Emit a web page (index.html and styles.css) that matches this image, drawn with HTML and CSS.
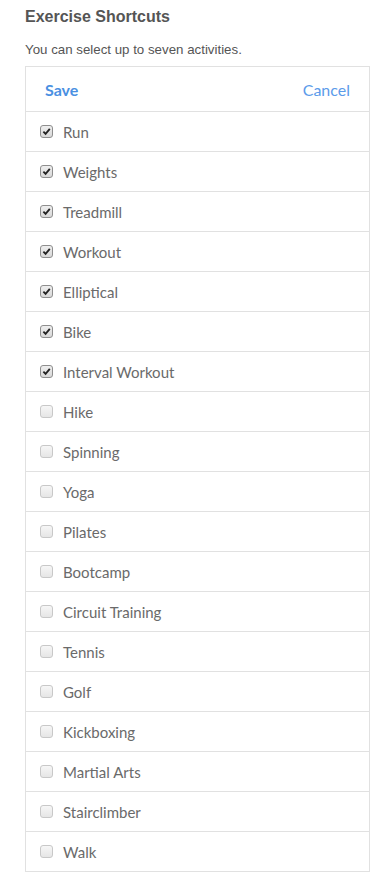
FILE: index.html
```html
<!DOCTYPE html>
<html>
<head>
<meta charset="utf-8">
<link rel="stylesheet" href="styles.css">
</head>
<body>
<div class="page">
  <h1 class="title">Exercise Shortcuts</h1>
  <p class="hint">You can select up to seven activities.</p>
  <div class="panel">
    <div class="panel-head">
      <span class="save">Save</span>
      <span class="cancel">Cancel</span>
    </div>
    <ul class="list">
      <li class="item"><span class="box on"><svg viewBox="0 0 12 12"><path d="M2.6 6.2 L5 8.6 L9.6 3.2" /></svg></span><span class="label">Run</span></li>
      <li class="item"><span class="box on"><svg viewBox="0 0 12 12"><path d="M2.6 6.2 L5 8.6 L9.6 3.2" /></svg></span><span class="label">Weights</span></li>
      <li class="item"><span class="box on"><svg viewBox="0 0 12 12"><path d="M2.6 6.2 L5 8.6 L9.6 3.2" /></svg></span><span class="label">Treadmill</span></li>
      <li class="item"><span class="box on"><svg viewBox="0 0 12 12"><path d="M2.6 6.2 L5 8.6 L9.6 3.2" /></svg></span><span class="label">Workout</span></li>
      <li class="item"><span class="box on"><svg viewBox="0 0 12 12"><path d="M2.6 6.2 L5 8.6 L9.6 3.2" /></svg></span><span class="label">Elliptical</span></li>
      <li class="item"><span class="box on"><svg viewBox="0 0 12 12"><path d="M2.6 6.2 L5 8.6 L9.6 3.2" /></svg></span><span class="label">Bike</span></li>
      <li class="item"><span class="box on"><svg viewBox="0 0 12 12"><path d="M2.6 6.2 L5 8.6 L9.6 3.2" /></svg></span><span class="label">Interval Workout</span></li>
      <li class="item"><span class="box"></span><span class="label">Hike</span></li>
      <li class="item"><span class="box"></span><span class="label">Spinning</span></li>
      <li class="item"><span class="box"></span><span class="label">Yoga</span></li>
      <li class="item"><span class="box"></span><span class="label">Pilates</span></li>
      <li class="item"><span class="box"></span><span class="label">Bootcamp</span></li>
      <li class="item"><span class="box"></span><span class="label">Circuit Training</span></li>
      <li class="item"><span class="box"></span><span class="label">Tennis</span></li>
      <li class="item"><span class="box"></span><span class="label">Golf</span></li>
      <li class="item"><span class="box"></span><span class="label">Kickboxing</span></li>
      <li class="item"><span class="box"></span><span class="label">Martial Arts</span></li>
      <li class="item"><span class="box"></span><span class="label">Stairclimber</span></li>
      <li class="item"><span class="box"></span><span class="label">Walk</span></li>
    </ul>
  </div>
</div>
</body>
</html>
```

FILE: styles.css
```css
html, body {
  margin: 0;
  padding: 0;
  background: #fff;
}
body {
  font-family: "Liberation Sans", Arial, sans-serif;
  color: #555;
}
.page {
  padding: 0 20px 0 25px;
}
.title {
  margin: 0;
  padding-top: 7px;
  font-size: 16px;
  line-height: 19px;
  font-weight: bold;
  color: #555;
}
.hint {
  margin: 0;
  padding-top: 16px;
  font-size: 13.3px;
  line-height: 15px;
  color: #555;
}
.panel {
  margin-top: 9px;
  width: 343px;
  border: 1px solid #e1e1e1;
}
.panel-head {
  display: flex;
  justify-content: space-between;
  align-items: center;
  height: 44px;
  padding: 0 19px 0 19px;
  border-bottom: 1px solid #e1e1e1;
  font-family: Lato, "Open Sans", sans-serif;
  font-size: 16px;
}
.save {
  font-weight: bold;
  color: #4a90e2;
}
.cancel {
  color: #5b9bea;
}
.list {
  list-style: none;
  margin: 0;
  padding: 0;
}
.item {
  display: flex;
  align-items: center;
  height: 39px;
  padding-left: 14px;
  border-bottom: 1px solid #e1e1e1;
  font-family: Lato, "Open Sans", sans-serif;
  font-size: 15px;
  color: #6a6a6a;
}
.item:last-child {
  border-bottom: none;
}
.box {
  display: inline-flex;
  align-items: center;
  justify-content: center;
  box-sizing: border-box;
  width: 13px;
  height: 13px;
  margin-right: 10px;
  border: 1px solid #c8c8c8;
  border-radius: 3px;
  background: linear-gradient(#f6f6f6, #e6e6e6);
}
.box.on {
  border-color: #8e8e8e;
  background: linear-gradient(#eeeeee, #d8d8d8);
}
.box svg {
  width: 11px;
  height: 11px;
  fill: none;
  stroke: #222;
  stroke-width: 2;
}
.label {
  line-height: 18px;
}
```
